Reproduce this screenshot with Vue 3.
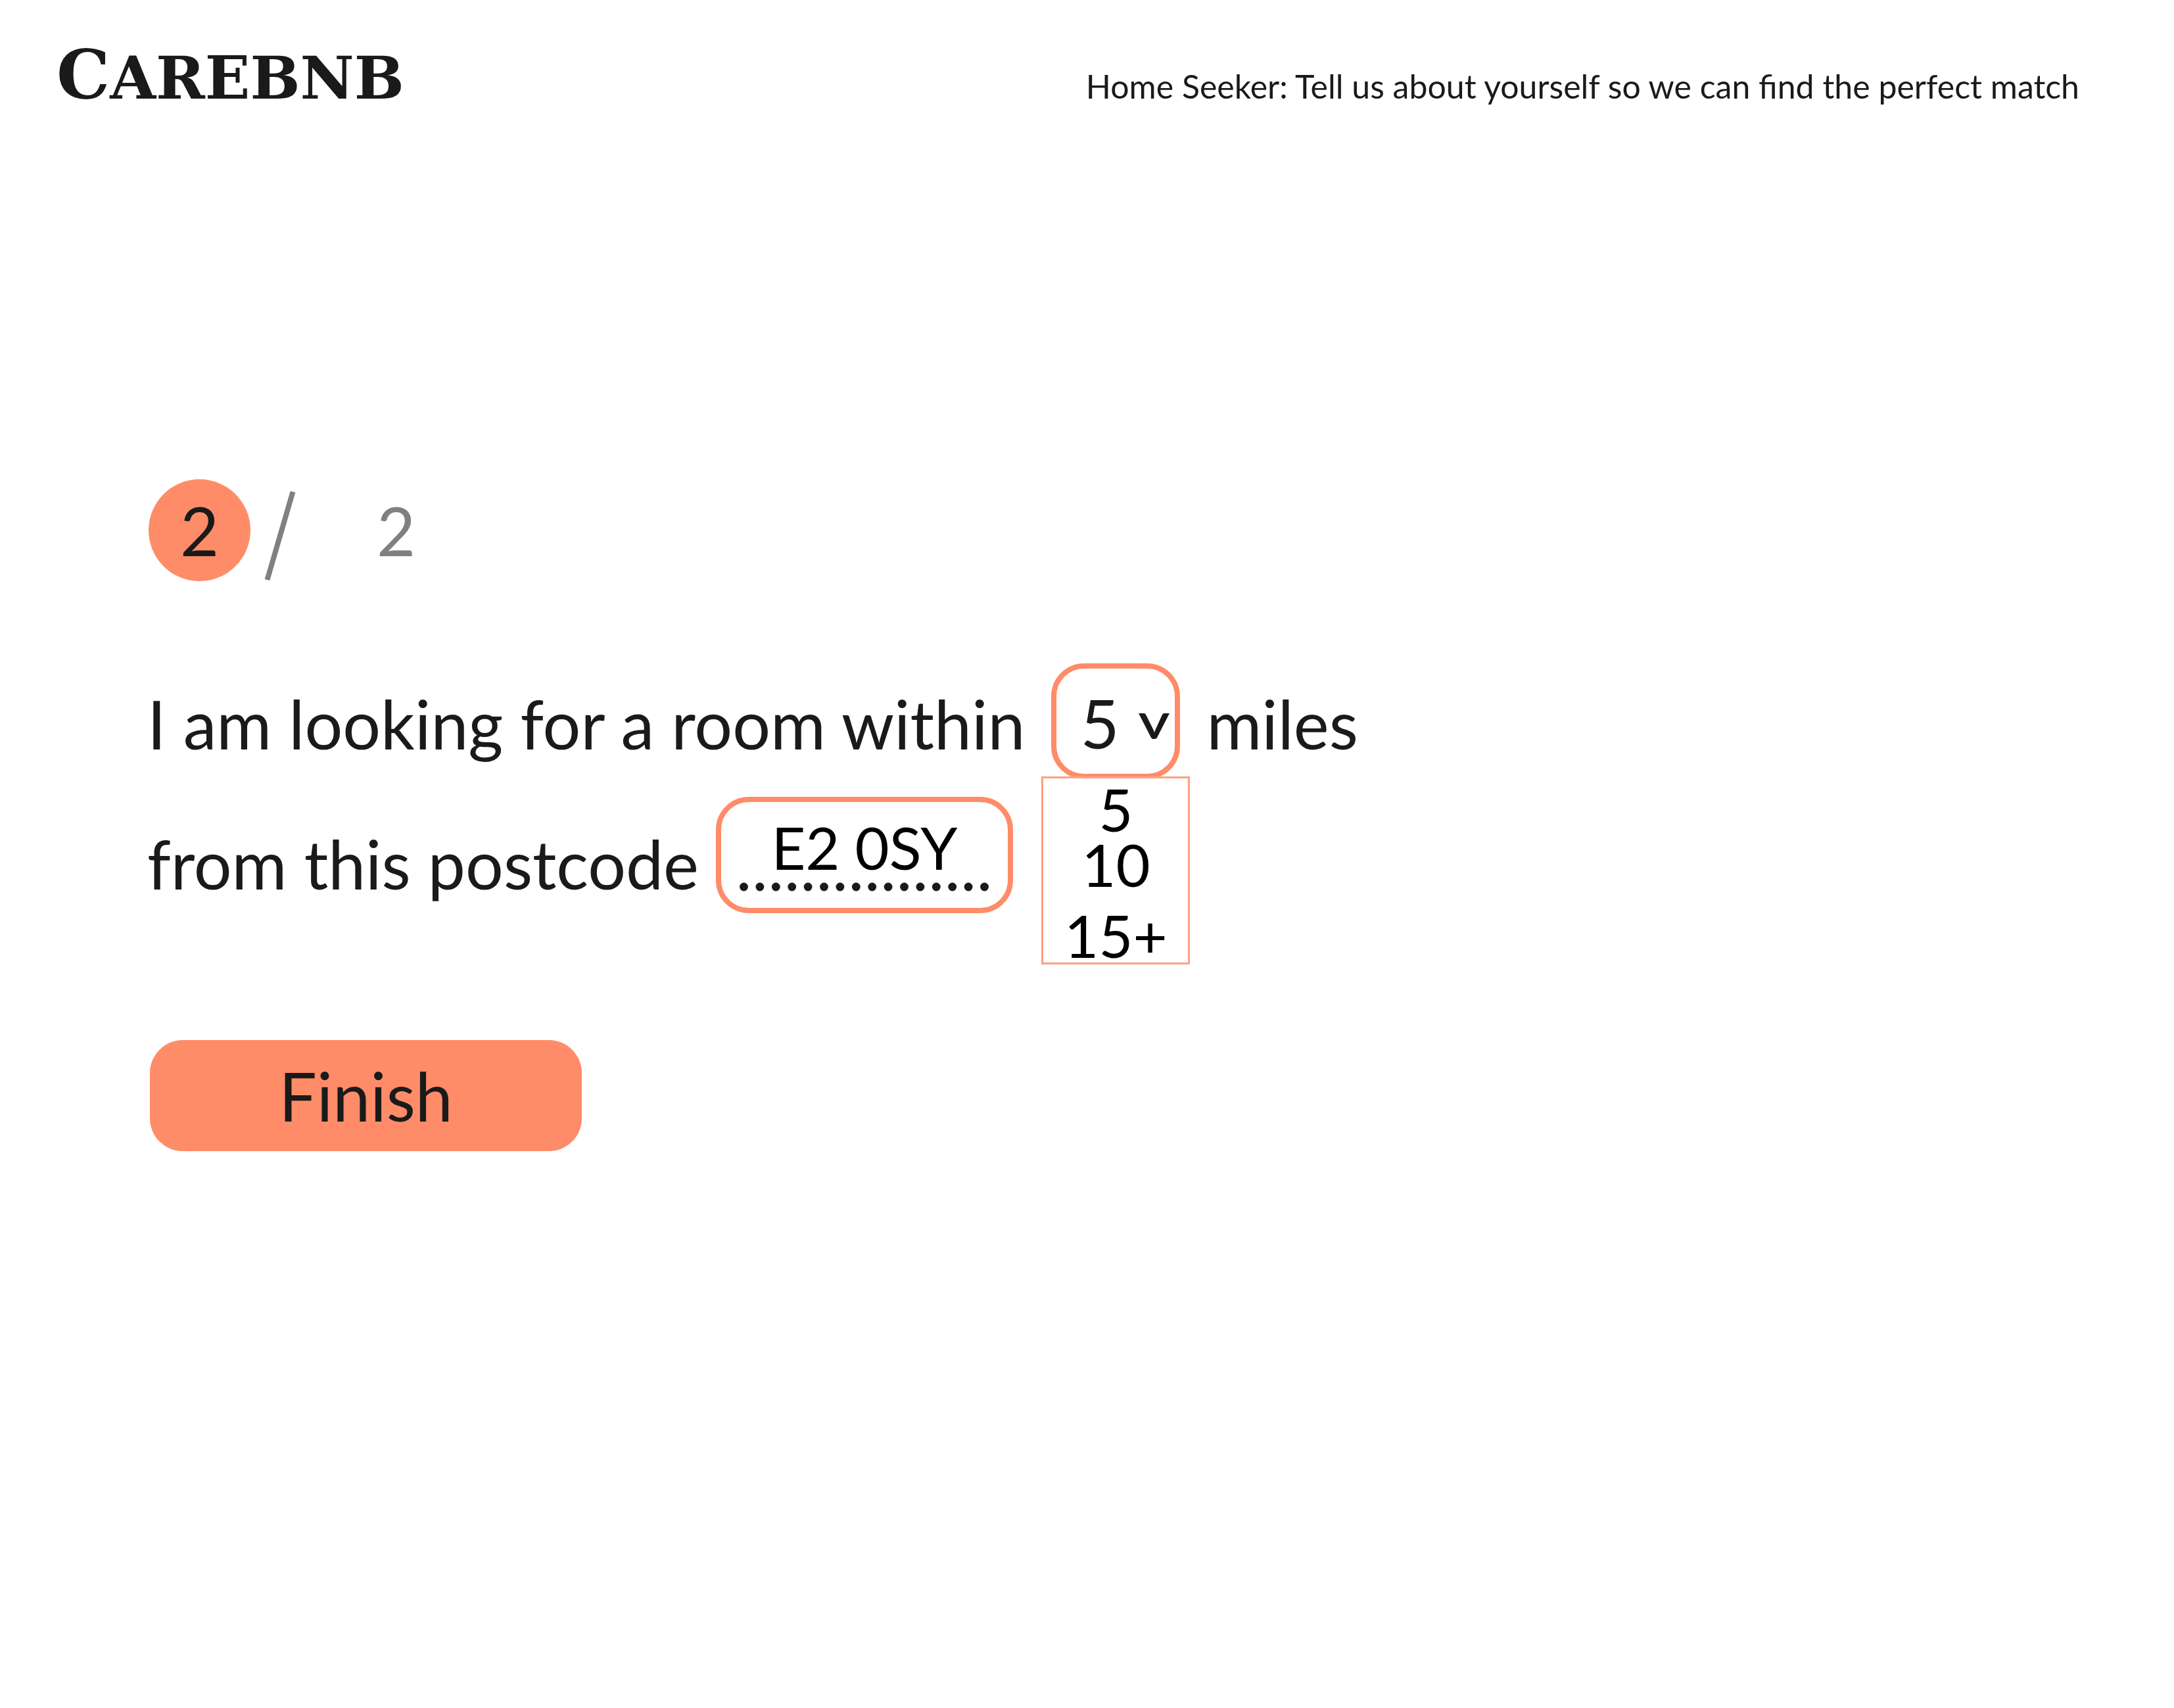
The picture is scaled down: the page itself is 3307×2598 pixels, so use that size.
<script setup>
import { ref } from 'vue'

const distances = ['5', '10', '15+']
const distance = ref('5')
const postcode = ref('E2 0SY')
const dots = Array.from({ length: 16 }, (_, i) => i)
</script>

<template>
  <div class="page">
    <header class="header">
      <a class="logo" href="#">C<span class="logo-small">AREBNB</span></a>
      <h1 class="tagline">Home Seeker: Tell us about yourself so we can find the perfect match</h1>
    </header>

    <main class="main">
      <div class="steps">
        <span class="step-current">2</span>
        <svg class="step-slash" viewBox="0 0 48 138" aria-hidden="true">
          <path d="M43.5 2 L4.5 136" stroke="#808080" stroke-width="8" />
        </svg>
        <span class="step-total">2</span>
      </div>

      <form @submit.prevent>
        <div class="row row-distance">
          <label class="words" for="distance">I am looking for a room within</label>
          <div class="picker">
            <select id="distance" v-model="distance" class="picker-select">
              <option v-for="d in distances" :key="d" :value="d">{{ d }}</option>
            </select>
            <svg class="picker-arrow" viewBox="0 0 47 39" aria-hidden="true">
              <path d="M0 0 H8 Q10 0 11 2 L22 24 Q23 26 24 29 Q25 26 26 24 L36 2 Q37 0 39 0 H47 L28 37 Q27 39 25 39 H22 Q20 39 19 37 Z" fill="#1a1a1a" />
            </svg>
            <ul class="menu">
              <li v-for="d in distances" :key="d" class="menu-item" @click="distance = d">{{ d }}</li>
            </ul>
          </div>
          <span class="words">miles</span>
        </div>

        <div class="row row-postcode">
          <label class="words" for="postcode">from this postcode</label>
          <div class="field">
            <input id="postcode" v-model="postcode" class="field-input" type="text" />
            <svg class="field-dots" viewBox="0 0 380 14" aria-hidden="true">
              <circle v-for="i in dots" :key="i" :cx="6.5 + i * 24.4" cy="7" r="6.4" fill="#1a1a1a" />
            </svg>
          </div>
        </div>

        <button class="finish" type="submit">Finish</button>
      </form>
    </main>
  </div>
</template>

<style>
body {
  margin: 0;
  background: #fff;
}
</style>

<style scoped>
.page {
  box-sizing: border-box;
  padding: 54px 144px 200px 86px;
  font-family: Lato, "Liberation Sans", sans-serif;
  font-size: 102px;
  line-height: 120px;
  color: #1a1a1a;
}
.header {
  display: flex;
  align-items: baseline;
  justify-content: space-between;
}
.logo {
  font-family: "DejaVu Serif", serif;
  font-size: 102px;
  font-weight: 700;
  color: inherit;
  text-decoration: none;
}
.logo-small {
  font-size: 90px;
}
.tagline {
  margin: 0;
  font-size: 50px;
  font-weight: 400;
  line-height: 60px;
}
.main {
  padding: 551px 0 0 138px;
}
.steps {
  display: flex;
  align-items: center;
  padding-left: 2px;
}
.step-current {
  width: 155px;
  height: 155px;
  border-radius: 50%;
  background: #ff8c69;
  line-height: 155px;
  text-align: center;
}
.step-slash {
  width: 48px;
  height: 138px;
  margin: 16px 123px 0 21px;
}
.step-total {
  color: #808080;
}
.row {
  display: flex;
  align-items: flex-start;
}
.row-distance {
  gap: 40px;
  margin-top: 125px;
}
.row-distance .words {
  padding-top: 32px;
}
.row-postcode {
  gap: 26px;
  margin-top: 27px;
}
.row-postcode .words {
  padding-top: 42px;
}
.words {
  white-space: nowrap;
}
.picker {
  position: relative;
  width: 196px;
}
.picker-select {
  display: block;
  box-sizing: border-box;
  width: 100%;
  height: 176px;
  padding: 6px 0 0 36px;
  border: 8px solid #ff8c69;
  border-radius: 50px;
  background: #fff;
  appearance: none;
  font: inherit;
  color: inherit;
}
.picker-arrow {
  position: absolute;
  top: 76px;
  right: 16px;
  width: 47px;
  height: 39px;
  pointer-events: none;
}
.menu {
  position: absolute;
  top: 172px;
  left: -15px;
  right: -15px;
  z-index: 1;
  display: flex;
  flex-direction: column;
  margin: 0;
  padding: 0;
  border: 3px solid #ffa080;
  background: #fff;
  list-style: none;
  font-size: 90px;
  line-height: 84px;
  text-align: center;
  color: #000;
}
.menu-item:first-child {
  padding-top: 4px;
}
.menu-item:last-child {
  padding-top: 24px;
}
.field {
  box-sizing: border-box;
  display: flex;
  flex-direction: column;
  align-items: center;
  width: 452px;
  height: 177px;
  padding-top: 14px;
  border: 8px solid #ff8c69;
  border-radius: 50px;
}
.field-input {
  box-sizing: border-box;
  width: 100%;
  height: 108px;
  padding: 0;
  border: 0;
  outline: 0;
  background: transparent;
  font: inherit;
  font-size: 90px;
  line-height: 108px;
  text-align: center;
  color: #000;
}
.field-dots {
  width: 380px;
  height: 14px;
}
.finish {
  display: block;
  width: 657px;
  height: 169px;
  margin: 193px 0 0 4px;
  padding: 0;
  border: 0;
  border-radius: 50px;
  background: #ff8c69;
  font: inherit;
  color: inherit;
}
</style>
